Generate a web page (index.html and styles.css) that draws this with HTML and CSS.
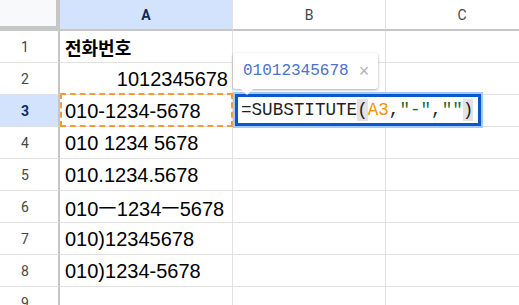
FILE: index.html
```html
<!DOCTYPE html>
<html lang="ko">
<head>
<meta charset="utf-8">
<link rel="stylesheet" href="styles.css">
</head>
<body>
<div class="sheet">
  <div class="corner"></div>
  <div class="colhead active">A</div>
  <div class="colhead">B</div>
  <div class="colhead">C</div>

  <div class="rowhead">1</div>
  <div class="cell bold">전화번호</div>
  <div class="cell"></div>
  <div class="cell"></div>

  <div class="rowhead">2</div>
  <div class="cell num">1012345678</div>
  <div class="cell"></div>
  <div class="cell"></div>

  <div class="rowhead active">3</div>
  <div class="cell ref">010-1234-5678</div>
  <div class="cell"></div>
  <div class="cell"></div>

  <div class="rowhead">4</div>
  <div class="cell">010 1234 5678</div>
  <div class="cell"></div>
  <div class="cell"></div>

  <div class="rowhead">5</div>
  <div class="cell">010.1234.5678</div>
  <div class="cell"></div>
  <div class="cell"></div>

  <div class="rowhead">6</div>
  <div class="cell">010ㅡ1234ㅡ5678</div>
  <div class="cell"></div>
  <div class="cell"></div>

  <div class="rowhead">7</div>
  <div class="cell">010)12345678</div>
  <div class="cell"></div>
  <div class="cell"></div>

  <div class="rowhead">8</div>
  <div class="cell">010)1234-5678</div>
  <div class="cell"></div>
  <div class="cell"></div>

  <div class="rowhead">9</div>
  <div class="cell"></div>
  <div class="cell"></div>
  <div class="cell"></div>

  <div class="tooltip">
    <span class="tip-value">01012345678</span>
    <span class="tip-close">×</span>
  </div>
  <div class="editor"><span>=SUBSTITUTE</span><span class="paren">(</span><span class="ref-a">A3</span><span>,</span><span class="str">"-"</span><span>,</span><span class="str">""</span><span class="paren">)</span></div>
</div>
</body>
</html>
```
FILE: styles.css
```css
html, body {
  margin: 0;
  padding: 0;
  background: #ffffff;
  overflow: hidden;
}

.sheet {
  position: relative;
  display: grid;
  grid-template-columns: 60px 173px 153px 153px;
  grid-template-rows: 31px repeat(9, 32px);
  width: 539px;
  font-family: "Liberation Sans", Arial, "Noto Sans CJK KR", sans-serif;
}

.corner {
  background: #f8f9fa;
  border-right: 2px solid #c4c7c5;
  border-bottom: 2px solid #c4c7c5;
  box-shadow: inset -2px -3px 0 #c4c7c5;
}

.colhead {
  display: flex;
  align-items: center;
  justify-content: center;
  border-right: 1px solid #e1e1e1;
  border-bottom: 2px solid #c4c7c5;
  color: #444746;
  font-family: Roboto, "Liberation Sans", sans-serif;
  font-size: 14px;
  padding-top: 1px;
}

.colhead.active {
  background: #d3e3fd;
  color: #0b2a5c;
  font-weight: bold;
}

.rowhead {
  display: flex;
  align-items: center;
  justify-content: center;
  padding-right: 8px;
  border-right: 2px solid #c4c7c5;
  border-bottom: 1px solid #e1e1e1;
  color: #444746;
  font-family: Roboto, "Liberation Sans", sans-serif;
  font-size: 14px;
}

.rowhead.active {
  background: #d3e3fd;
  color: #0b2a5c;
  font-weight: bold;
}

.cell {
  position: relative;
  display: flex;
  align-items: center;
  padding: 1px 4px 0 5px;
  border-right: 1px solid #e1e1e1;
  border-bottom: 1px solid #e1e1e1;
  color: #000000;
  font-size: 20px;
  white-space: nowrap;
}

.cell.bold {
  font-family: "Noto Sans CJK KR", sans-serif;
  font-weight: bold;
  font-size: 18px;
}

.cell.num {
  justify-content: flex-end;
}

.cell.ref::after {
  content: "";
  position: absolute;
  left: 0;
  top: -2px;
  right: -1px;
  bottom: -1px;
  border: 2px dashed #f09d3a;
}

.tooltip {
  position: absolute;
  left: 233px;
  top: 53px;
  width: 145px;
  height: 36px;
  box-sizing: border-box;
  display: flex;
  align-items: center;
  gap: 10px;
  padding-left: 10px;
  background: #ffffff;
  border-radius: 3px;
  box-shadow: 0 1px 3px rgba(60, 64, 67, 0.3), 0 1px 2px rgba(60, 64, 67, 0.15);
  z-index: 3;
}

.tooltip::after {
  content: "";
  position: absolute;
  left: 8px;
  bottom: -6px;
  border-left: 6px solid transparent;
  border-right: 6px solid transparent;
  border-top: 6px solid #ffffff;
}

.tip-value {
  font-family: "Liberation Mono", "DejaVu Sans Mono", monospace;
  font-size: 16px;
  color: #4a72c9;
}

.tip-close {
  font-family: "Liberation Sans", sans-serif;
  font-size: 18px;
  color: #b0b4b8;
}

.editor {
  position: absolute;
  left: 235px;
  top: 94px;
  width: 246px;
  height: 32px;
  box-sizing: border-box;
  display: flex;
  align-items: center;
  padding-left: 3px;
  background: #ffffff;
  border: 3px solid #0b57d0;
  box-shadow: 0 0 0 2px #a8c7fa;
  font-family: "Liberation Mono", "DejaVu Sans Mono", monospace;
  font-size: 17.6px;
  color: #1f1f1f;
  white-space: pre;
  z-index: 2;
}

.paren {
  background: #e3e3e3;
  line-height: 22px;
}

.ref-a {
  color: #f09300;
}

.str {
  color: #1e6b34;
}
```
